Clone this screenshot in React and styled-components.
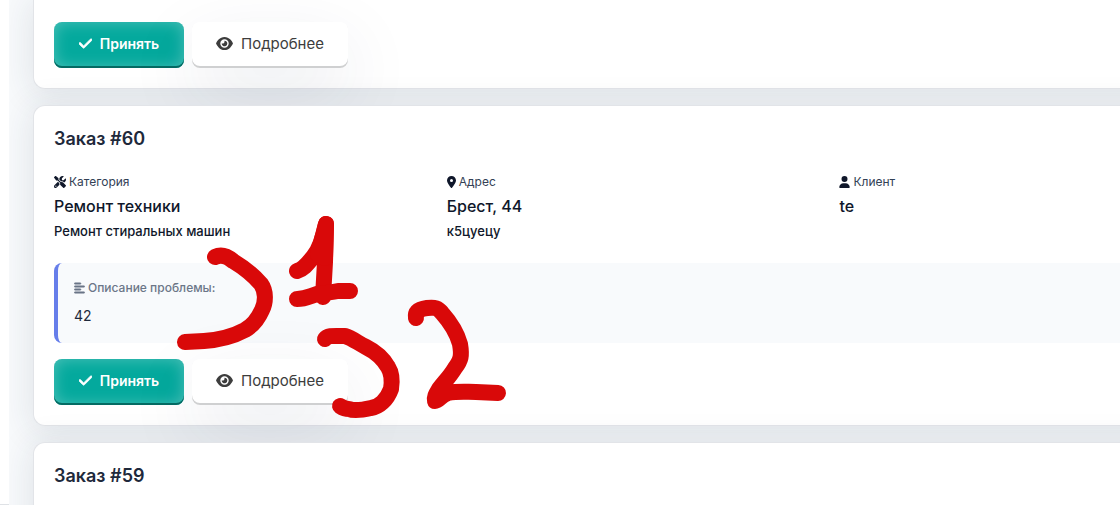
import React from "react";
import styled, { createGlobalStyle } from "styled-components";
import {
  FaAlignLeft,
  FaCheck,
  FaEye,
  FaLocationDot,
  FaScrewdriverWrench,
  FaUser,
} from "react-icons/fa6";

const order = {
  id: 60,
  details: [
    { icon: FaScrewdriverWrench, iconWidth: 12, label: "Категория", value: "Ремонт техники", note: "Ремонт стиральных машин" },
    { icon: FaLocationDot, iconWidth: 9, label: "Адрес", value: "Брест, 44", note: "к5цуецу" },
    { icon: FaUser, iconWidth: 11, label: "Клиент", value: "te" },
  ],
  problem: "42",
};

function OrderActions() {
  return (
    <Actions>
      <Button type="button" $primary $iconWidth={13}>
        <FaCheck strokeWidth={28} />
        Принять
      </Button>
      <Button type="button" $iconWidth={17}>
        <FaEye />
        Подробнее
      </Button>
    </Actions>
  );
}

function Annotations() {
  return (
    <Marks viewBox="0 0 520 430" width="520" height="430" aria-hidden="true">
      <path d="M215 257 C221 254 227 256 233 261 C243 267 254 276 261 284 C266 291 266 302 262 310 C258 319 252 326 245 330 C232 337 218 340 204 341 L185 342" />
      <path d="M297 271 C304 269 308 263 313 257 C319 250 323 239 326 224 L325 262 L323 297" />
      <path d="M326 224 L325 258 L318 254 Z" />
      <path d="M297 299 C306 299 310 296 317 294 C326 293 333 292 338 291 L350 291" />
      <path d="M325 339 C328 335 334 336 345 336 C352 338 358 343 366 347 C376 352 384 360 388 367 C393 375 392 383 391 389 C387 400 379 407 371 408 C362 410 354 411 349 409 C346 409 343 408 340 406" />
      <path d="M416 318 C415 311 420 309 427 308 C435 307 438 308 442 313 C450 322 457 333 460 344 C462 356 461 360 455 368 C449 378 443 383 439 389 C436 394 434 397 435 401 C439 401 441 395 448 393 C458 391 466 392 476 392 L498 393" />
    </Marks>
  );
}

function App() {
  return (
    <>
      <GlobalStyle />
      <Page>
        <Sidebar />
        <Main>
          <Card $cut="top">
            <OrderActions />
          </Card>
          <Card>
            <Title>Заказ #{order.id}</Title>
            <Details>
              {order.details.map(({ icon: Icon, iconWidth, label, value, note }) => (
                <div key={label}>
                  <Label $iconWidth={iconWidth}>
                    <Icon color="#0f172a" />
                    {label}
                  </Label>
                  <Value>{value}</Value>
                  {note && <Note>{note}</Note>}
                </div>
              ))}
            </Details>
            <Problem>
              <ProblemLabel $iconWidth={11}>
                <FaAlignLeft strokeWidth={20} />
                Описание проблемы:
              </ProblemLabel>
              <ProblemText>{order.problem}</ProblemText>
            </Problem>
            <OrderActions />
          </Card>
          <Card $cut="bottom">
            <Title>Заказ #59</Title>
          </Card>
        </Main>
        <Annotations />
      </Page>
    </>
  );
}

const GlobalStyle = createGlobalStyle`
  * {
    box-sizing: border-box;
  }

  body {
    margin: 0;
    background: #f8fafc;
    color: #0f172a;
    font-family: Inter, "Noto Sans", sans-serif;
  }
`;

const Page = styled.div`
  position: relative;
  display: flex;
  height: 100vh;
  overflow: hidden;
`;

const Sidebar = styled.aside`
  flex: 0 0 9px;
  background: #ffffff;
  border-bottom: 1px solid #dfe2e6;
`;

const Main = styled.main`
  flex: 1;
  display: flex;
  flex-direction: column;
  gap: 16px;
  padding-left: 24px;
  overflow: hidden;
`;

const Card = styled.section`
  flex: ${(p) => (p.$cut === "bottom" ? "1" : "none")};
  margin-right: -64px;
  padding: ${(p) => (p.$cut === "top" ? "22px" : "20px")} 64px 20px 20px;
  background: #ffffff;
  border: 1px solid #e2e4e8;
  border-width: ${(p) => (p.$cut === "top" ? "0 0 1px 1px" : p.$cut === "bottom" ? "1px 0 0 1px" : "1px 0 1px 1px")};
  border-radius: ${(p) => (p.$cut === "top" ? "0 0 0 12px" : p.$cut === "bottom" ? "12px 0 0 0" : "12px 0 0 12px")};
  box-shadow: 0 4px 32px 4px rgba(31, 50, 70, 0.1);
`;

const Title = styled.h3`
  margin: 0 0 20px;
  font-size: 18px;
  font-weight: 600;
  line-height: 26px;
  color: #1e293b;
`;

const Details = styled.div`
  display: grid;
  grid-template-columns: 7fr 7fr 5fr;
  margin-bottom: 21px;
`;

const Label = styled.div`
  display: flex;
  align-items: center;
  gap: 3px;
  font-size: 12px;
  line-height: 20px;
  color: #334155;

  svg {
    width: ${(p) => p.$iconWidth}px;
    height: 12px;
  }
`;

const Value = styled.div`
  font-size: 16px;
  font-weight: 500;
  line-height: 28px;
`;

const Note = styled.div`
  font-size: 13px;
  font-weight: 500;
  line-height: 22px;
`;

const Problem = styled.div`
  margin-bottom: 16px;
  padding: 16px;
  background: #f8fafc;
  border-left: 4px solid #667eea;
  border-radius: 8px 0 0 8px;
`;

const ProblemLabel = styled(Label)`
  margin-bottom: 8px;
  font-weight: 500;
  line-height: 18px;
  color: #6b7688;
`;

const ProblemText = styled.div`
  font-size: 14px;
  line-height: 22px;
  color: #1e293b;
`;

const Actions = styled.div`
  display: flex;
  gap: 8px;
`;

const Button = styled.button`
  display: flex;
  align-items: center;
  justify-content: center;
  gap: 8px;
  min-width: 130px;
  height: 46px;
  padding: 0 24px 4px;
  border: 0;
  border-radius: 8px;
  font-family: inherit;
  font-size: ${(p) => (p.$primary ? "14px" : "15px")};
  font-weight: ${(p) => (p.$primary ? "600" : "400")};
  color: ${(p) => (p.$primary ? "#ffffff" : "#3d3d3d")};
  background: ${(p) => (p.$primary ? "#04a99d" : "#ffffff")};
  box-shadow: ${(p) =>
    p.$primary
      ? "inset 0 -2px 0 #046b63, inset 0 0 16px rgba(255, 255, 255, 0.3)"
      : "inset 0 -2px 0 #cfd0d1, 0 24px 72px rgba(40, 50, 90, 0.1)"};
  cursor: pointer;

  svg {
    width: ${(p) => p.$iconWidth}px;
    height: 15px;
  }
`;

const Marks = styled.svg`
  position: absolute;
  top: 0;
  left: 0;
  pointer-events: none;

  path {
    fill: none;
    stroke: #d90909;
    stroke-width: 16;
    stroke-linecap: round;
    stroke-linejoin: round;
  }
`;

export default App;
